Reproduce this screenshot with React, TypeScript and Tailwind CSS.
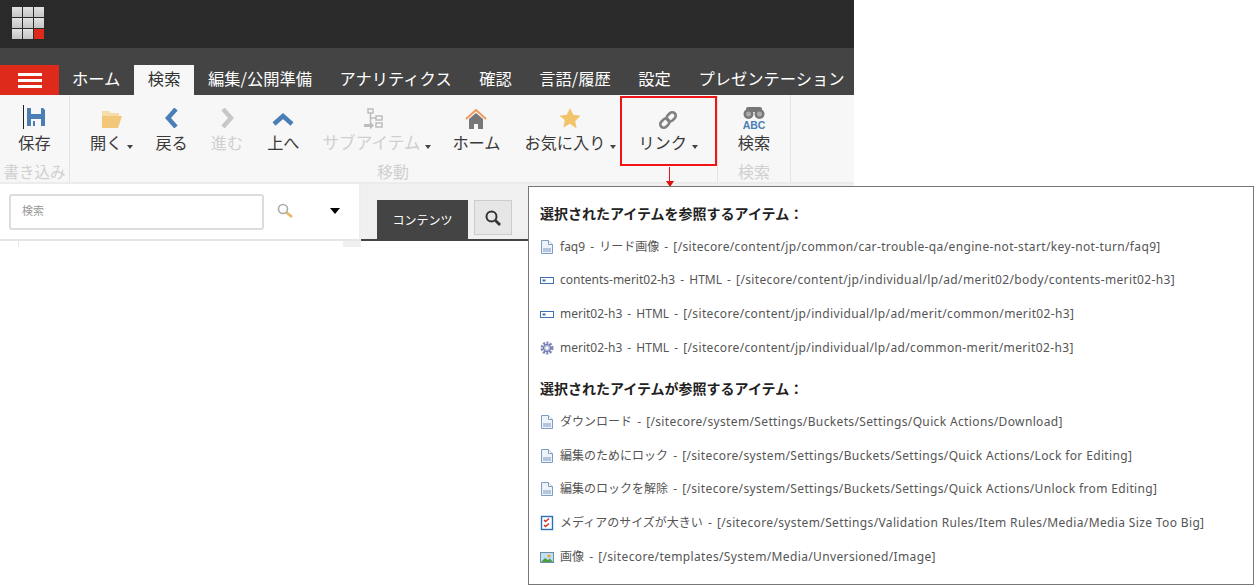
const jp = "font-['Noto_Sans_CJK_JP','Noto_Sans',sans-serif]";

const tabs = ["ホーム", "検索", "編集/公開準備", "アナリティクス", "確認", "言語/履歴", "設定", "プレゼンテーション"];

const FileIcon = () => (
  <svg width="14" height="16" viewBox="0 0 14 16" className="shrink-0">
    <path d="M1.500 1.500h7l4 4v9h-11z" fill="#eef3fa" stroke="#7f9cc2" />
    <path d="M8.500 1.500v4h4" fill="#fff" stroke="#7f9cc2" />
    <rect x="3" y="9" width="8" height="4" fill="#b4c6de" />
  </svg>
);

const HtmlIcon = () => (
  <svg width="14" height="16" viewBox="0 0 14 16" className="shrink-0">
    <rect x="0.500" y="5.500" width="13" height="6" fill="#fff" stroke="#3f6fb5" />
    <rect x="2.500" y="7.500" width="3" height="2" fill="#3f6fb5" />
  </svg>
);

const GearIcon = () => (
  <svg width="14" height="16" viewBox="0 0 14 16" className="shrink-0">
    <circle cx="7" cy="8" r="5" fill="none" stroke="#7f86b8" strokeWidth="3" strokeDasharray="2 1.200" />
    <circle cx="7" cy="8" r="3.600" fill="#b9bfdc" stroke="#6a71a8" />
    <circle cx="7" cy="8" r="1.500" fill="#fff" />
  </svg>
);

const CheckIcon = () => (
  <svg width="14" height="16" viewBox="0 0 14 16" className="shrink-0">
    <rect x="1.500" y="1.500" width="11" height="13" fill="#fff" stroke="#2f6fb5" strokeWidth="1.400" />
    <path d="M4 5l1.500 1.500L9 3.500M4 10l1.500 1.500L9 8.500" fill="none" stroke="#c9302c" strokeWidth="1.400" />
  </svg>
);

const ImageIcon = () => (
  <svg width="14" height="16" viewBox="0 0 14 16" className="shrink-0">
    <rect x="0.500" y="3.500" width="13" height="10" fill="#bfe0f2" stroke="#6d8fa8" />
    <path d="M1 13l4-4 3 2 2-1.500 3 3.500z" fill="#4f9e3c" />
    <circle cx="9" cy="7" r="1.600" fill="#f0a030" />
  </svg>
);

const refsTo = [
  { icon: <FileIcon />, name: "faq9 - リード画像", path: "[/sitecore/content/jp/common/car-trouble-qa/engine-not-start/key-not-turn/faq9]" },
  { icon: <HtmlIcon />, name: "contents-merit02-h3 - HTML", path: "[/sitecore/content/jp/individual/lp/ad/merit02/body/contents-merit02-h3]" },
  { icon: <HtmlIcon />, name: "merit02-h3 - HTML", path: "[/sitecore/content/jp/individual/lp/ad/merit/common/merit02-h3]" },
  { icon: <GearIcon />, name: "merit02-h3 - HTML", path: "[/sitecore/content/jp/individual/lp/ad/common-merit/merit02-h3]" },
];

const refsFrom = [
  { icon: <FileIcon />, name: "ダウンロード", path: "[/sitecore/system/Settings/Buckets/Settings/Quick Actions/Download]" },
  { icon: <FileIcon />, name: "編集のためにロック", path: "[/sitecore/system/Settings/Buckets/Settings/Quick Actions/Lock for Editing]" },
  { icon: <FileIcon />, name: "編集のロックを解除", path: "[/sitecore/system/Settings/Buckets/Settings/Quick Actions/Unlock from Editing]" },
  { icon: <CheckIcon />, name: "メディアのサイズが大きい", path: "[/sitecore/system/Settings/Validation Rules/Item Rules/Media/Media Size Too Big]" },
  { icon: <ImageIcon />, name: "画像", path: "[/sitecore/templates/System/Media/Unversioned/Image]" },
];

const Caret = () => (
  <span className="inline-block ml-[5px] align-middle border-x-[3.5px] border-t-[4px] border-x-transparent border-t-[#444] translate-y-[2px]" />
);

const RibbonButton = ({ icon, label, caret, disabled, className = "" }: { icon: React.ReactNode; label: string; caret?: boolean; disabled?: boolean; className?: string }) => (
  <div className={`flex flex-col items-center ${className}`}>
    <div className="h-[26px] flex items-end justify-center">{icon}</div>
    <div className={`mt-[1px] text-[16.2px] leading-[22px] whitespace-nowrap ${disabled ? "text-[#cfcfcf]" : "text-[#3a3a3a]"}`}>
      {label}
      {caret && <Caret />}
    </div>
  </div>
);

const RefRow = ({ icon, name, path }: { icon: React.ReactNode; name: string; path: string }) => (
  <div className="flex items-center gap-1.5 h-[33.6px] text-[12px] text-[#555] whitespace-nowrap font-['Noto_Sans','Noto_Sans_CJK_JP',sans-serif]">
    {icon}
    <span>
      <span className="[word-spacing:2px]">{name} - </span>
      <span className="tracking-[0.36px]">{path}</span>
    </span>
  </div>
);

export default function App() {
  return (
    <div className={`relative w-[1254px] h-[585px] overflow-hidden bg-white ${jp}`}>
      <div className="w-[854px]">
        {/* top bar */}
        <div className="h-[48px] bg-[#2a2a2a] pl-3 pt-[7px]">
          <div className="grid grid-cols-3 gap-px w-[32px]">
            {Array.from({ length: 9 }).map((_, i) => (
              <div key={i} className={`h-[10px] ${i === 8 ? "bg-[#dd2a1b]" : "bg-gradient-to-b from-[#e2e2e2] to-[#c4c4c4]"}`} />
            ))}
          </div>
        </div>

        {/* tabs */}
        <div className="h-[47px] bg-[#444] flex items-end">
          <div className="w-[59px] h-[30px] bg-[#dd2a1b] flex flex-col items-center justify-center gap-[3px]">
            <div className="w-6 h-[3px] bg-white" />
            <div className="w-6 h-[3px] bg-white" />
            <div className="w-6 h-[3px] bg-white" />
          </div>
          <div className="flex h-[30px] ml-[13px] gap-[27.5px] text-[16.3px] text-white items-start">
            {tabs.map((t) =>
              t === "検索" ? (
                <div key={t} className="bg-[#f7f7f7] text-[#333] h-[30px] px-[14px] -mx-[14px] leading-[26px]">
                  {t}
                </div>
              ) : (
                <div key={t} className="leading-[26px] whitespace-nowrap">{t}</div>
              )
            )}
          </div>
        </div>

        {/* ribbon */}
        <div className="h-[89px] bg-[#f7f7f7] flex border-b-2 border-[#ececec]">
          <div className="w-[70px] border-r border-[#e3e3e3] flex flex-col items-center pt-[9px]">
            <RibbonButton
              label="保存"
              icon={
                <svg width="24" height="24" viewBox="0 0 24 24" className="mb-[1px]">
                  <path d="M0.500 0v24" stroke="#222" />
                  <path d="M4 3h16l2 2v16H4z" fill="#4a7fb5" />
                  <rect x="8" y="3" width="10" height="6" fill="#f7f7f7" />
                  <rect x="8" y="14" width="10" height="7" fill="#f7f7f7" />
                  <rect x="10" y="16" width="2" height="5" fill="#4a7fb5" />
                </svg>
              }
            />
            <div className="mt-auto mb-[1px] text-[15.500px] leading-[20px] text-[#d0d0d0] whitespace-nowrap">書き込み</div>
          </div>
          <div className="w-[648px] border-r border-[#e3e3e3] relative flex pt-[9px] pl-[20px]">
            <RibbonButton
              label="開く"
              caret
              icon={
                <svg width="22" height="19" viewBox="0 0 22 19" className="mb-[1px]">
                  <path d="M1 1h7l2 2h8v3H1z" fill="#f5dca8" />
                  <path d="M1 18V6h20l-4 12z" fill="#f2c77a" />
                </svg>
              }
            />
            <RibbonButton
              className="ml-[22px]"
              label="戻る"
              icon={
                <svg width="14" height="20" viewBox="0 0 14 20" className="mb-[2px]">
                  <path d="M11 1L3 10l8 9" fill="none" stroke="#4a7fb5" strokeWidth="4.500" />
                </svg>
              }
            />
            <RibbonButton
              className="ml-[23px]"
              label="進む"
              disabled
              icon={
                <svg width="14" height="20" viewBox="0 0 14 20" className="mb-[2px]">
                  <path d="M3 1l8 9-8 9" fill="none" stroke="#c8c8c8" strokeWidth="4.500" />
                </svg>
              }
            />
            <RibbonButton
              className="ml-[24px]"
              label="上へ"
              icon={
                <svg width="22" height="14" viewBox="0 0 22 14" className="mb-[3px]">
                  <path d="M2 11l9-8 9 8" fill="none" stroke="#4a7fb5" strokeWidth="4.500" />
                </svg>
              }
            />
            <div className="ml-[23px] flex flex-col items-center">
              <div className="h-[26px] flex items-end pr-[6px]">
                <svg width="20" height="22" viewBox="0 0 20 22">
                  <g fill="none" stroke="#bdbdbd" strokeWidth="1.500">
                    <rect x="4" y="1" width="5" height="4" />
                    <rect x="12" y="8" width="6" height="4" />
                    <rect x="12" y="15" width="6" height="4" />
                    <path d="M6.500 5v12M6.500 10H12" />
                  </g>
                  <path d="M0 16h6v-2.500l4 4-4 4V19H0z" fill="#bdbdbd" />
                </svg>
              </div>
              <div className="mt-[1px] text-[16.6px] leading-[22px] text-[#cfcfcf] whitespace-nowrap">
                サブアイテム
                <Caret />
              </div>
            </div>
            <RibbonButton
              className="ml-[21px]"
              label="ホーム"
              icon={
                <svg width="22" height="21" viewBox="0 0 22 21">
                  <path d="M1 10L11 1l10 9" fill="none" stroke="#ef9a5a" strokeWidth="2" />
                  <path d="M4 10l7-6 7 6v10h-5v-5H9v5H4z" fill="#777" />
                </svg>
              }
            />
            <RibbonButton
              className="ml-[24px]"
              label="お気に入り"
              caret
              icon={
                <svg width="24" height="23" viewBox="0 0 24 24">
                  <path d="M12 1l3.400 7.200 7.600 1-5.600 5.300 1.500 7.900L12 17.600l-6.900 3.800 1.500-7.900L1 9.200l7.600-1z" fill="#f2c469" />
                </svg>
              }
            />
            <RibbonButton
              className="ml-[22px]"
              label="リンク"
              caret
              icon={
                <svg width="22" height="22" viewBox="0 0 22 22" className="mb-[-1px]">
                  <g fill="none" stroke="#808080" strokeWidth="2.600" transform="rotate(-45 11 11)">
                    <rect x="1.500" y="7.500" width="10" height="7" rx="3.500" />
                    <rect x="10.500" y="7.500" width="10" height="7" rx="3.500" />
                  </g>
                </svg>
              }
            />
            <div className="absolute bottom-[1px] left-[307px] text-[16px] leading-[20px] text-[#d0d0d0]">移動</div>
          </div>
          <div className="w-[73px] border-r border-[#e3e3e3] flex flex-col items-center pt-[9px]">
            <RibbonButton
              label="検索"
              icon={
                <svg width="24" height="24" viewBox="0 0 24 24">
                  <rect x="4" y="1" width="16" height="5" rx="2" fill="#777" />
                  <circle cx="6.500" cy="8" r="5" fill="#777" />
                  <circle cx="17.500" cy="8" r="5" fill="#777" />
                  <circle cx="6.500" cy="8" r="2.500" fill="#aaa" />
                  <circle cx="17.500" cy="8" r="2.500" fill="#aaa" />
                  <text x="12" y="23" textAnchor="middle" fontSize="10.500" fontWeight="700" fill="#4a7fb5" className="font-['Liberation_Sans',sans-serif]">ABC</text>
                </svg>
              }
            />
            <div className="mt-auto mb-[1px] text-[16px] leading-[20px] text-[#d0d0d0]">検索</div>
          </div>
        </div>

        {/* search row */}
        <div className="flex h-[57px]">
          <div className="w-[361px] border-r-2 border-[#eee] border-b-2 border-b-[#e6e6e6] flex items-start pt-[10px] pl-[9px]">
            <div className="w-[255px] h-[36px] border-2 border-[#ddd] rounded-[3px] bg-white text-[11px] text-[#999] pl-[11px] leading-[28px]">検索</div>
            <svg width="18" height="18" viewBox="0 0 18 18" className="ml-[12px] mt-[8px]">
              <circle cx="7" cy="7" r="4.500" fill="none" stroke="#aaa" strokeWidth="1.600" />
              <path d="M10.500 10.500L16 15" stroke="#eab45f" strokeWidth="2.400" />
            </svg>
            <div className="ml-[36px] mt-[14px] border-x-[5px] border-t-[6px] border-x-transparent border-t-black" />
          </div>
          <div className="flex-1 bg-[#f0f0f0] flex items-start pl-[16px] pt-[16px] gap-[6px] border-b-2 border-b-[#444]">
            <div className="w-[91px] h-[39px] bg-[#444] text-white text-[12px] leading-[39px] text-center">コンテンツ</div>
            <div className="w-[38px] h-[35px] bg-[#e6e6e6] border border-[#ccc] flex items-center justify-center">
              <svg width="18" height="18" viewBox="0 0 18 18">
                <circle cx="7.500" cy="7.500" r="5" fill="none" stroke="#333" strokeWidth="2" />
                <path d="M11.500 11.500L16 16" stroke="#333" strokeWidth="2.800" />
              </svg>
            </div>
          </div>
        </div>
        <div className="flex h-[6px] w-[361px]">
          <div className="ml-[18px] flex-1 border-l border-[#e6e6e6]" />
          <div className="w-[18px] bg-[#f0f0f0]" />
        </div>
      </div>

      {/* red highlight over the link button */}
      <div className="absolute left-[620px] top-[96px] w-[97px] h-[70px] border-2 border-[#f01414]" />
      <div className="absolute left-[669px] top-[167px] w-px h-[15px] bg-[#f01414]" />
      <div className="absolute left-[666px] top-[181px] border-x-[4px] border-t-[6px] border-x-transparent border-t-[#e01010]" />

      {/* references popup */}
      <div className="absolute left-[528px] top-[186px] w-[726px] h-[399px] bg-white border border-[#777] pl-[11px] pt-[16px]">
        <div className="text-[14px] leading-[20px] font-bold text-[#222] mb-[7px]">選択されたアイテムを参照するアイテム：</div>
        {refsTo.map((r) => (
          <RefRow key={r.path} icon={r.icon} name={r.name} path={r.path} />
        ))}
        <div className="text-[14px] leading-[20px] font-bold text-[#222] mt-[14px] mb-[7px]">選択されたアイテムが参照するアイテム：</div>
        {refsFrom.map((r) => (
          <RefRow key={r.path} icon={r.icon} name={r.name} path={r.path} />
        ))}
      </div>
    </div>
  );
}
